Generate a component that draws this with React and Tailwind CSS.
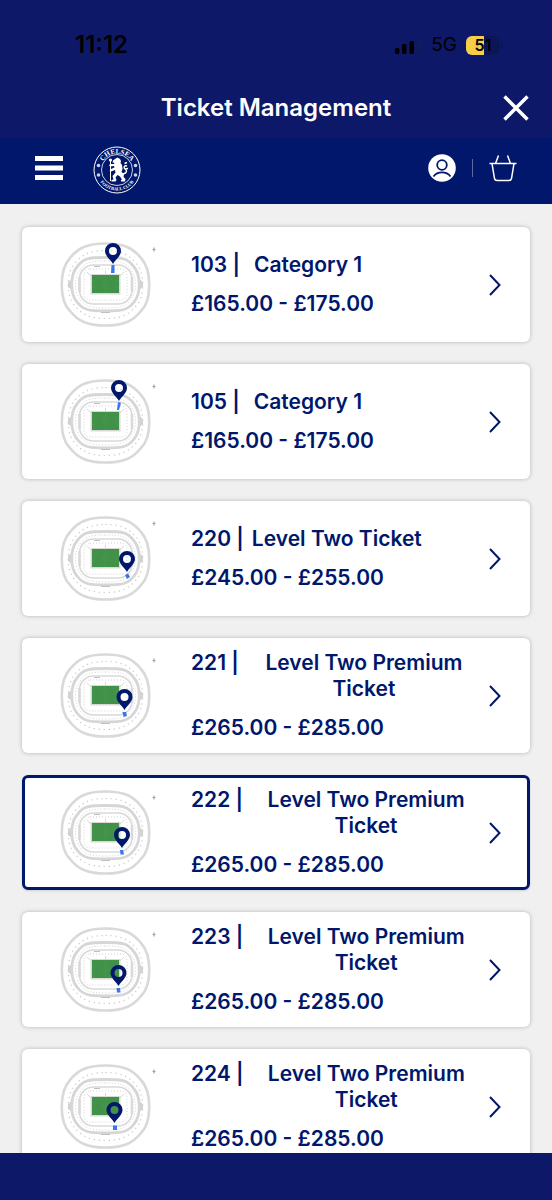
import { clsx } from 'clsx';

const tickets = [
  { block: '103', name: 'Category 1', price: '£165.00 - £175.00', pin: [53, 24], seat: '51.5,24 54.5,24 54.5,32 51,32' },
  { block: '105', name: 'Category 1', price: '£165.00 - £175.00', pin: [59, 24], seat: '58,24 61,25 59,32 57,32' },
  { block: '220', name: 'Level Two Ticket', price: '£245.00 - £255.00', pin: [67, 58], seat: '65,60 68,58.5 70,62 67,64', tight: true },
  { block: '221', name: 'Level Two Premium Ticket', price: '£265.00 - £285.00', pin: [64.5, 59], seat: '62.5,60 66,60 67,64 63.5,65', wide: true },
  { block: '222', name: 'Level Two Premium Ticket', price: '£265.00 - £285.00', pin: [62, 60], seat: '60,61 63,61 64,65.5 60.5,65.5', wide: true, selected: true },
  { block: '223', name: 'Level Two Premium Ticket', price: '£265.00 - £285.00', pin: [58.5, 61], seat: '56.5,62 60,62 60.5,66.5 57,66.5', wide: true },
  { block: '224', name: 'Level Two Premium Ticket', price: '£265.00 - £285.00', pin: [54.5, 61], seat: '53,62.5 57,62.5 57,67 53,67', wide: true },
];

function StadiumMap({ pin, seat }) {
  return (
    <svg viewBox="0 0 100 87" className="h-[87px] w-[100px] shrink-0" fill="none" aria-hidden="true">
      <path d="M45.5 2.5C64 2.500 73 7 81 17C92 29 92 59 81 70C73 80 64 84.500 45.500 84.500C27 84.500 18 80 10 70C-1 59 -1 29 10 17C18 7 27 2.500 45.500 2.500Z" stroke="#d9d9d9" strokeWidth="2.600" />
      <path d="M45.500 9.500C62 9.500 69 14 76 22C85 32 85 56 76 65C69 73 62 77.500 45.500 77.500C29 77.500 22 73 15 65C6 56 6 32 15 22C22 14 29 9.500 45.500 9.500Z" stroke="#c8c8c8" strokeWidth="1.200" strokeDasharray="1.200 3.800" />
      <path d="M12 38L8 41V46L12 49ZM79 38L83 41V46L79 49Z" fill="#d2d2d2" />
      <path d="M45.500 16.500C62 16.500 68 17 74 26C81 34 81 53 74 61C68 69 62 70 45.500 70C29 70 23 69 17 61C10 53 10 34 17 26C23 17 29 16.500 45.500 16.500Z" stroke="#d6d6d6" strokeWidth="2.800" />
      <path d="M45.500 20C60 20 66 21 71 29C77 36 77 51 71 58C66 66 60 67 45.500 67C31 67 25 66 20 58C14 51 14 36 20 29C25 21 31 20 45.500 20Z" stroke="#d4d4d4" strokeWidth="1" strokeDasharray="1 2" />
      <rect x="19.500" y="24" width="52.500" height="39" rx="14" stroke="#d9d9d9" strokeWidth="1.600" />
      <path d="M19.500 36V51M72 36V51" stroke="#d9d9d9" strokeWidth="2.600" />
      <rect x="24" y="28" width="43" height="31" rx="6" stroke="#cfcfcf" strokeWidth="1" strokeDasharray="1 2" />
      <path d="M27 31L31 35M64 31L60 35M45.500 30V33" stroke="#c0c0c0" strokeWidth=".6" />
      <path d="M41 71.500H50M34 25.500H40" stroke="#c0c0c0" strokeWidth="1.200" />
      <rect x="30.500" y="33" width="30" height="20.500" fill="#d9d9d9" />
      <rect x="32" y="34" width="27" height="18" fill="#429149" />
      <path d="M45.500 34V52M32 39.500H35V46.500H32M59 39.500H56V46.500H59" stroke="#4d9a54" strokeWidth=".5" />
      <circle cx="45.500" cy="43" r="2.500" stroke="#4d9a54" strokeWidth=".5" />
      <path d="M94 6.500V10.500M92.500 8.500H95.500" stroke="#a3a3a3" strokeWidth="1.200" />
      <polygon points={seat} fill="#3b74f0" />
      <g transform={`translate(${pin[0]} ${pin[1]})`}>
        <path
          fillRule="evenodd"
          d="M0 -1C-2 -5-8 -9-8 -14A8 8 0 0 1 8 -14C8 -9 2 -5 0 -1ZM0 -10A4 4 0 1 0 0 -18A4 4 0 0 0 0 -10Z"
          fill="#00176b"
        />
      </g>
    </svg>
  );
}

function TicketCard({ ticket }) {
  return (
    <button
      type="button"
      aria-pressed={!!ticket.selected}
      className={clsx(
        'flex min-h-[115px] w-full items-center rounded-md bg-white py-[11px] pr-[29px] pl-[38px] text-left text-[21px] leading-[26px] font-semibold text-[#00176b]',
        ticket.selected
          ? 'shadow-sm outline-3 -outline-offset-3 outline-[#00176b]'
          : 'shadow-[0_0_4px_rgba(0,0,0,0.25)]'
      )}
    >
      <StadiumMap pin={ticket.pin} seat={ticket.seat} />
      <span className="ml-[31px] flex min-w-0 flex-1 flex-col gap-[13px]">
        <span className={clsx('flex', ticket.tight ? 'gap-2' : ticket.wide ? 'gap-0' : 'gap-[14px]')}>
          <span className="shrink-0">{ticket.block} |</span>
          <span className={clsx(ticket.wide && 'flex-1 px-4 text-center')}>{ticket.name}</span>
        </span>
        <span>{ticket.price}</span>
      </span>
      <svg viewBox="0 0 12 24" className="h-6 w-3 shrink-0" fill="none" stroke="#00176b" strokeWidth="2" aria-hidden="true">
        <path d="M1 2L10.500 12L1 22" />
      </svg>
    </button>
  );
}

function StatusBar() {
  return (
    <div className="flex h-[77px] items-start justify-between pt-[30px] pr-[49px] pl-[75px] text-black">
      <span className="text-2xl leading-[30px] font-semibold">11:12</span>
      <div className="flex h-[30px] items-center gap-[9px]">
        <svg viewBox="0 0 27 17" className="h-[17px] w-[27px]" aria-hidden="true">
          <rect x="0" y="11" width="4.500" height="6" rx="1.500" />
          <rect x="7" y="7" width="4.500" height="10" rx="1.500" />
          <rect x="14.500" y="4" width="4.500" height="13" rx="1.500" />
          <rect x="22" y="0" width="4.500" height="17" rx="1.500" fill="#0f1c5c" />
        </svg>
        <span className="text-[19px] leading-[30px]">5G</span>
        <div className="flex items-center">
          <span className="flex h-[19px] w-[34px] items-center justify-center rounded-md bg-linear-to-r from-[#f7ce46] from-53% to-[#0d1654] to-53% text-base leading-[19px] font-semibold">
            51
          </span>
          <span className="ml-px h-[7px] w-[2px] rounded-r-full bg-[#0d1654]" />
        </div>
      </div>
    </div>
  );
}

function Crest() {
  return (
    <svg viewBox="0 0 48 52" className="h-[52px] w-12" fill="none" role="img" aria-label="Chelsea Football Club">
      <defs>
        <path id="crest-top" d="M7.500 28A16.500 16.500 0 0 1 40.500 28" />
        <path id="crest-bottom" d="M3.500 28A20.500 20.500 0 0 0 44.500 28" />
      </defs>
      <circle cx="24" cy="28" r="23" stroke="#fff" strokeWidth="1" />
      <circle cx="24" cy="28" r="15.500" stroke="#fff" strokeWidth=".8" />
      <g fill="#fff" fontFamily="'Liberation Serif', serif" fontWeight="700" textAnchor="middle">
        <text fontSize="7">
          <textPath href="#crest-top" startOffset="50%">CHELSEA</textPath>
        </text>
        <text fontSize="4.500">
          <textPath href="#crest-bottom" startOffset="50%">FOOTBALL CLUB</textPath>
        </text>
      </g>
      <g fill="#c9d2f0">
        <circle cx="5.500" cy="23.500" r="1.800" />
        <circle cx="5.500" cy="33" r="1.800" />
        <circle cx="42.500" cy="23.500" r="1.800" />
        <circle cx="42.500" cy="33" r="1.800" />
      </g>
      {/* lion holding the staff */}
      <path d="M17.500 19V39" stroke="#fff" strokeWidth="1" />
      <circle cx="17.500" cy="18" r="1.600" fill="#fff" />
      <path
        fill="#fff"
        d="M22 17L24.500 15.500L27 17L28 19L27.500 21L29 23L29.500 27L28.500 30L31 32L30.500 35L32.500 37L32 39.500H28V38L29 37.500L27 34.500L24.500 33L22.500 35.500L23.500 38L22.500 39.500H18.500V38L20.500 37.500L19.500 34L22.500 30.500L22 28L18 29.500L16.500 28.500L18 27L21.500 25.500L21 24L17 24.500L16 23L18 22L21.500 22L20.500 20.500L19.500 20.500L20 18.500Z"
      />
      <path d="M30 32C34 31 34.500 28.500 32 27C30 25.500 31.500 23 34 24M32 27L35 26.500M31.500 21.500L34 20.500" stroke="#fff" strokeWidth="1.400" />
    </svg>
  );
}

function NavBar() {
  return (
    <nav className="flex h-[66px] items-center bg-[#00176b] px-[35px] pb-[7px]">
      <button type="button" aria-label="Open menu">
        <svg viewBox="0 0 28 24" className="h-6 w-7" fill="#fff" aria-hidden="true">
          <path d="M0 0H28V5H0ZM0 9.500H28V14.500H0ZM0 19H28V24H0Z" />
        </svg>
      </button>
      <a href="#home" className="ml-[30px]">
        <Crest />
      </a>
      <div className="ml-auto flex items-center">
        <button type="button" aria-label="Account">
          <svg viewBox="0 0 28 28" className="size-7" fill="none" aria-hidden="true">
            <circle cx="14" cy="14" r="13.800" fill="#fff" />
            <circle cx="14" cy="11" r="4.800" stroke="#00176b" strokeWidth="1.800" />
            <path d="M5.500 22.500C9.500 17 18.500 17 22.500 22.500" stroke="#00176b" strokeWidth="1.800" />
          </svg>
        </button>
        <span className="ml-4 h-[18px] w-px bg-[#5c6a9f]" />
        <button type="button" aria-label="Basket" className="ml-4">
          <svg viewBox="0 0 28 28" className="size-7" fill="none" stroke="#fff" strokeWidth="1.500" aria-hidden="true">
            <path d="M.5 9.500H27.500M9.500 1.500L6.500 9.500M18.500 1.500L21.500 9.500" />
            <path d="M3 9.500L5.500 24.500Q6 26.500 8 26.500H20Q22 26.500 22.500 24.500L25 9.500" />
          </svg>
        </button>
      </div>
    </nav>
  );
}

export default function App() {
  return (
    <div className="flex h-screen flex-col bg-[#f0f0f0] font-['Inter',sans-serif]">
      <header className="shrink-0 bg-[#0e1869]">
        <StatusBar />
        <div className="grid h-[61px] grid-cols-[1fr_auto_1fr] items-center px-[22px]">
          <h1 className="col-start-2 text-2xl font-semibold text-white">Ticket Management</h1>
          <button type="button" aria-label="Close" className="justify-self-end">
            <svg viewBox="0 0 28 28" className="size-7" stroke="#fff" strokeWidth="3.500" aria-hidden="true">
              <path d="M2.500 2.500L25.500 25.500M25.500 2.500L2.500 25.500" />
            </svg>
          </button>
        </div>
        <NavBar />
      </header>

      <main className="min-h-0 flex-1 overflow-y-auto px-[22px] pt-[23px] [scrollbar-width:none]">
        <ul className="flex flex-col gap-[22px]">
          {tickets.map((ticket) => (
            <li key={ticket.block}>
              <TicketCard ticket={ticket} />
            </li>
          ))}
        </ul>
      </main>

      <footer className="h-[47px] shrink-0 bg-[#0e1869]" />
    </div>
  );
}
